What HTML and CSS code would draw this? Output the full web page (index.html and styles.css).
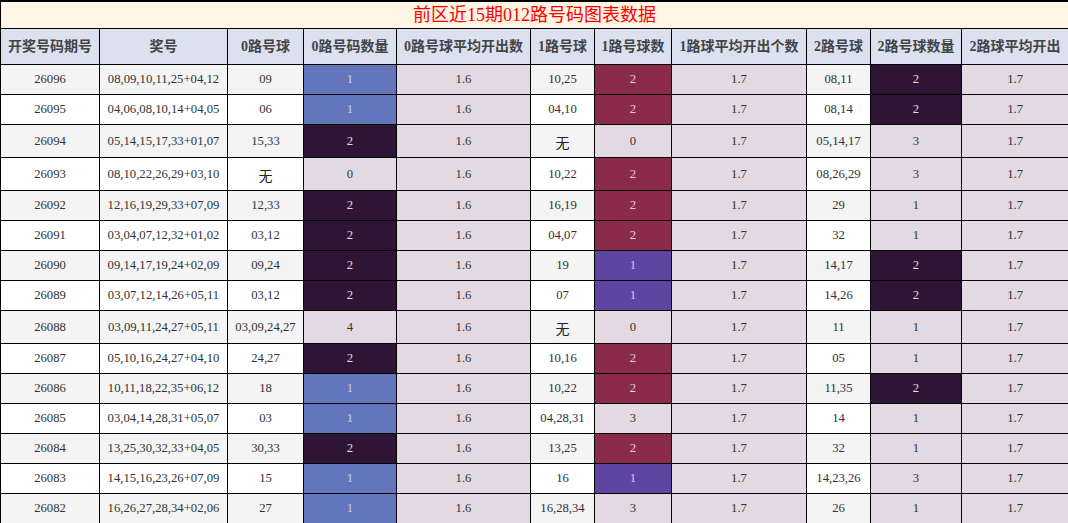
FILE: index.html
```html
<!DOCTYPE html>
<html lang="zh">
<head>
<meta charset="utf-8">
<link rel="stylesheet" href="styles.css">
</head>
<body>
<table class="chart">
<colgroup>
<col class="c1"><col class="c2"><col class="c3"><col class="c4"><col class="c5"><col class="c6"><col class="c7"><col class="c8"><col class="c9"><col class="c10"><col class="c11">
</colgroup>
<thead>
<tr class="title-row"><th colspan="11" class="title">前区近15期012路号码图表数据</th></tr>
<tr class="head-row">
<th>开奖号码期号</th><th>奖号</th><th>0路号球</th><th>0路号码数量</th><th>0路号球平均开出数</th><th>1路号球</th><th>1路号球数</th><th>1路球平均开出个数</th><th>2路号球</th><th>2路号球数量</th><th>2路球平均开出</th>
</tr>
</thead>
<tbody>
<tr class="odd"><td>26096</td><td>08,09,10,11,25+04,12</td><td>09</td><td class="blue">1</td><td class="lav">1.6</td><td>10,25</td><td class="maroon">2</td><td class="lav">1.7</td><td>08,11</td><td class="dark">2</td><td class="lav">1.7</td></tr>
<tr><td>26095</td><td>04,06,08,10,14+04,05</td><td>06</td><td class="blue">1</td><td class="lav">1.6</td><td>04,10</td><td class="maroon">2</td><td class="lav">1.7</td><td>08,14</td><td class="dark">2</td><td class="lav">1.7</td></tr>
<tr class="odd tall"><td>26094</td><td>05,14,15,17,33+01,07</td><td>15,33</td><td class="dark">2</td><td class="lav">1.6</td><td class="none">无</td><td class="lav">0</td><td class="lav">1.7</td><td>05,14,17</td><td class="lav">3</td><td class="lav">1.7</td></tr>
<tr class="tall"><td>26093</td><td>08,10,22,26,29+03,10</td><td class="none">无</td><td class="lav">0</td><td class="lav">1.6</td><td>10,22</td><td class="maroon">2</td><td class="lav">1.7</td><td>08,26,29</td><td class="lav">3</td><td class="lav">1.7</td></tr>
<tr class="odd"><td>26092</td><td>12,16,19,29,33+07,09</td><td>12,33</td><td class="dark">2</td><td class="lav">1.6</td><td>16,19</td><td class="maroon">2</td><td class="lav">1.7</td><td>29</td><td class="lav">1</td><td class="lav">1.7</td></tr>
<tr><td>26091</td><td>03,04,07,12,32+01,02</td><td>03,12</td><td class="dark">2</td><td class="lav">1.6</td><td>04,07</td><td class="maroon">2</td><td class="lav">1.7</td><td>32</td><td class="lav">1</td><td class="lav">1.7</td></tr>
<tr class="odd"><td>26090</td><td>09,14,17,19,24+02,09</td><td>09,24</td><td class="dark">2</td><td class="lav">1.6</td><td>19</td><td class="purple">1</td><td class="lav">1.7</td><td>14,17</td><td class="dark">2</td><td class="lav">1.7</td></tr>
<tr><td>26089</td><td>03,07,12,14,26+05,11</td><td>03,12</td><td class="dark">2</td><td class="lav">1.6</td><td>07</td><td class="purple">1</td><td class="lav">1.7</td><td>14,26</td><td class="dark">2</td><td class="lav">1.7</td></tr>
<tr class="odd tall"><td>26088</td><td>03,09,11,24,27+05,11</td><td>03,09,24,27</td><td class="lav">4</td><td class="lav">1.6</td><td class="none">无</td><td class="lav">0</td><td class="lav">1.7</td><td>11</td><td class="lav">1</td><td class="lav">1.7</td></tr>
<tr><td>26087</td><td>05,10,16,24,27+04,10</td><td>24,27</td><td class="dark">2</td><td class="lav">1.6</td><td>10,16</td><td class="maroon">2</td><td class="lav">1.7</td><td>05</td><td class="lav">1</td><td class="lav">1.7</td></tr>
<tr class="odd"><td>26086</td><td>10,11,18,22,35+06,12</td><td>18</td><td class="blue">1</td><td class="lav">1.6</td><td>10,22</td><td class="maroon">2</td><td class="lav">1.7</td><td>11,35</td><td class="dark">2</td><td class="lav">1.7</td></tr>
<tr><td>26085</td><td>03,04,14,28,31+05,07</td><td>03</td><td class="blue">1</td><td class="lav">1.6</td><td>04,28,31</td><td class="lav">3</td><td class="lav">1.7</td><td>14</td><td class="lav">1</td><td class="lav">1.7</td></tr>
<tr class="odd"><td>26084</td><td>13,25,30,32,33+04,05</td><td>30,33</td><td class="dark">2</td><td class="lav">1.6</td><td>13,25</td><td class="maroon">2</td><td class="lav">1.7</td><td>32</td><td class="lav">1</td><td class="lav">1.7</td></tr>
<tr><td>26083</td><td>14,15,16,23,26+07,09</td><td>15</td><td class="blue">1</td><td class="lav">1.6</td><td>16</td><td class="purple">1</td><td class="lav">1.7</td><td>14,23,26</td><td class="lav">3</td><td class="lav">1.7</td></tr>
<tr class="odd"><td>26082</td><td>16,26,27,28,34+02,06</td><td>27</td><td class="blue">1</td><td class="lav">1.6</td><td>16,28,34</td><td class="lav">3</td><td class="lav">1.7</td><td>26</td><td class="lav">1</td><td class="lav">1.7</td></tr>
</tbody>
</table>
</body>
</html>
```

FILE: styles.css
```css
html, body {
  margin: 0;
  padding: 0;
  background: #ffffff;
}

.chart {
  width: 1068px;
  table-layout: fixed;
  border-collapse: collapse;
  font-family: "Liberation Serif", "Noto Sans CJK SC", serif;
  font-size: 12.7px;
  color: #333333;
  text-align: center;
}

.c1 { width: 99px; }
.c2 { width: 128px; }
.c3 { width: 76px; }
.c4 { width: 93px; }
.c5 { width: 134px; }
.c6 { width: 64px; }
.c7 { width: 77px; }
.c8 { width: 135px; }
.c9 { width: 64px; }
.c10 { width: 91px; }
.c11 { width: 107px; }

.chart th,
.chart td {
  border: 1px solid #000000;
  padding: 0;
  white-space: nowrap;
  overflow: hidden;
  line-height: 15px;
}

.title-row .title {
  height: 26px;
  border-top-width: 2px;
  background: #fdf6e5;
  color: #ff0000;
  font-family: "Liberation Serif", "Noto Sans CJK SC", serif;
  font-weight: normal;
  font-size: 18px;
  line-height: 26px;
}

.head-row th {
  height: 35px;
  background: #dce1f0;
  color: #444444;
  font-family: "Liberation Serif", "Noto Sans CJK SC", serif;
  font-weight: bold;
  font-size: 14px;
}

.chart tbody td {
  height: 29px;
  background: #ffffff;
}

.chart tbody tr.odd td {
  background: #f4f4f4;
}

.chart tbody tr.tall td {
  height: 32px;
}

.chart tbody tr.tall td.none {
  height: 30px;
  padding-top: 2px;
  font-family: "Noto Sans CJK SC", sans-serif;
  font-size: 14px;
  color: #222222;
}

.chart tbody td.lav,
.chart tbody tr.odd td.lav {
  background: #e2d9e2;
}

.chart tbody td.blue,
.chart tbody tr.odd td.blue {
  background: #6476bb;
  color: #c8cde6;
}

.chart tbody td.dark,
.chart tbody tr.odd td.dark {
  background: #2e1535;
  color: #e6dbe6;
}

.chart tbody td.maroon,
.chart tbody tr.odd td.maroon {
  background: #8b2b4c;
  color: #ead4dc;
}

.chart tbody td.purple,
.chart tbody tr.odd td.purple {
  background: #5f44a1;
  color: #cfc7e6;
}
```
